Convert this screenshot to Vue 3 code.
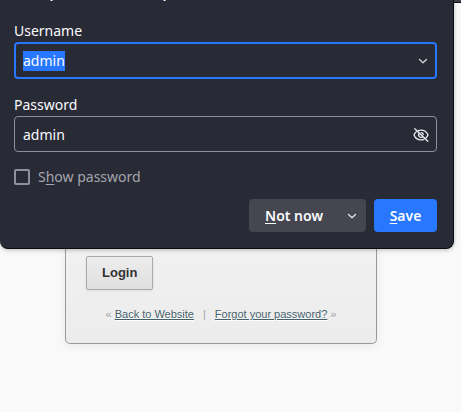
<script setup>
import { ref, onMounted } from 'vue'

const username = ref('admin')
const password = ref('admin')
const show = ref(false)
const userField = ref(null)

onMounted(() => {
  userField.value.focus()
  userField.value.select()
})
</script>

<template>
  <div class="page">
    <div class="toolbar"></div>
    <form class="doorhanger" @submit.prevent>
      <h1 class="title">Save password for http?</h1>
      <label class="label" for="username">Username</label>
      <div class="field focused">
        <input id="username" ref="userField" v-model="username" type="text" autocomplete="off" />
        <button type="button" class="icon" aria-label="Saved usernames">
          <svg width="16" height="16" viewBox="0 0 16 16" fill="none" stroke="#d4d4d8" stroke-width="1.3" stroke-linecap="round" stroke-linejoin="round">
            <path d="M4.500 6.500 8 9.800l3.500-3.300" />
          </svg>
        </button>
      </div>
      <label class="label" for="password">Password</label>
      <div class="field">
        <input id="password" v-model="password" type="text" autocomplete="off" />
        <button type="button" class="icon" aria-label="Hide password">
          <svg width="16" height="16" viewBox="0 0 16 16" fill="none" stroke="#ececf0" stroke-width="1.300" stroke-linecap="round">
            <path d="M5.200 3.700C6 3.300 7 3.100 8 3.100c3.200 0 5.800 1.900 7 4.900-.5 1.200-1.200 2.200-2.100 3" />
            <path d="M3.300 4.800C2.300 5.600 1.500 6.700 1 8c1.200 3 3.800 4.900 7 4.900 1 0 2-.2 2.900-.600" />
            <path d="M6.300 6.400a2.300 2.300 0 0 0 3.200 3.300M8.300 5.700A2.300 2.300 0 0 1 10.300 7.700" />
            <path d="M1.800 1.800l13 12.400" />
          </svg>
        </button>
      </div>
      <label class="check">
        <input v-model="show" type="checkbox" />
        <span>S<u>h</u>ow password</span>
      </label>
      <div class="actions">
        <div class="split">
          <button type="button" class="secondary"><span><u>N</u>ot now</span></button>
          <button type="button" class="more" aria-label="More options">
            <svg width="16" height="16" viewBox="0 0 16 16" fill="none" stroke="#e4e4e8" stroke-width="1.300" stroke-linecap="round" stroke-linejoin="round">
              <path d="M4.500 6.500 8 9.800l3.500-3.300" />
            </svg>
          </button>
        </div>
        <button type="submit" class="primary"><span><u>S</u>ave</span></button>
      </div>
    </form>
    <main class="card">
      <button type="button" class="login">Login</button>
      <p class="links">
        « <a href="#">Back to Website</a><span class="bar">|</span><a href="#">Forgot your password?</a> »
      </p>
    </main>
  </div>
</template>

<style>
body {
  background: #f9f9f9;
}
</style>

<style scoped>
.page {
  position: relative;
  overflow: hidden;
  padding-bottom: 68px;
}
.toolbar {
  position: absolute;
  inset: 0 0 auto;
  height: 2px;
  background: #42414d;
  border-bottom: 1px solid #0c0c0d;
}
.doorhanger {
  position: relative;
  z-index: 1;
  margin-right: 7px;
  padding: 0 16px 16px 14px;
  display: flex;
  flex-direction: column;
  background: #282a35;
  border: solid #0c0c12;
  border-width: 0 1px 1px 0;
  border-radius: 0 0 8px 8px;
  box-shadow: 0 1px 4px rgba(0, 0, 0, 0.25);
  color: #fbfbfe;
  font: 14px/20px "Noto Sans", sans-serif;
}
.title {
  margin: -17px 0 18px;
  font-size: 14px;
  line-height: 20px;
  font-weight: 600;
}
.label {
  margin-bottom: 1px;
}
.field {
  display: flex;
  align-items: center;
  height: 36px;
  box-sizing: border-box;
  margin-bottom: 16px;
  padding: 1px 7px 0 8px;
  border: 1px solid #8f8f9d;
  border-radius: 4px;
}
.field.focused {
  height: 37px;
  border: 2px solid #2777ff;
  padding: 0 4px 0 7px;
}
.field input {
  flex: 1;
  min-width: 0;
  padding: 0;
  border: 0;
  outline: 0;
  background: none;
  color: inherit;
  font: inherit;
}
.field input::selection {
  background: #2777ff;
  color: #fbfbfe;
}
.icon,
.more {
  display: flex;
  padding: 0;
  border: 0;
  background: none;
}
.check {
  display: flex;
  align-items: center;
  gap: 8px;
  margin-bottom: 13px;
  color: #a6a6ad;
  line-height: 18px;
}
.check input {
  appearance: none;
  width: 16px;
  height: 16px;
  margin: 0;
  border: 2px solid #8f8f9d;
  border-radius: 2px;
}
.actions {
  display: flex;
  justify-content: flex-end;
  gap: 8px;
}
.split {
  display: flex;
  border-radius: 4px;
  background: #454650;
}
.secondary,
.primary {
  height: 33px;
  padding: 0 16px;
  border: 0;
  border-radius: 4px;
  background: none;
  color: #fbfbfe;
  font: 600 14px/20px "Noto Sans", sans-serif;
}
.primary {
  min-width: 63px;
  padding: 0 15px;
  background: #2777ff;
}
.more {
  align-items: center;
  padding: 0 6px 0 5px;
}
u {
  text-underline-offset: 2px;
}
.card {
  margin: -6px 84px 0 65px;
  padding: 13px 20px 20px;
  border: 1px solid #999;
  border-top: 0;
  border-radius: 0 0 5px 5px;
  background: linear-gradient(#f1f1f1, #ececec);
  box-shadow: 0 2px 8px rgba(0, 0, 0, 0.07);
  font: 11px/18px "Liberation Sans", Arial, sans-serif;
}
.login {
  height: 34px;
  padding: 0 15px;
  border: 1px solid #aaa;
  border-radius: 2px;
  background: linear-gradient(#ededed, #dfdfdf);
  color: #333;
  box-shadow: 0 1px 3px rgba(0, 0, 0, 0.08);
  font: 700 13px/18px "Liberation Sans", Arial, sans-serif;
}
.links {
  margin: 15px 0 0;
  text-align: center;
  white-space: nowrap;
  color: #999;
  text-shadow: 0 1px 0 #fff;
}
.links a {
  color: #44606b;
}
.bar {
  margin: 0 9px;
}
</style>
